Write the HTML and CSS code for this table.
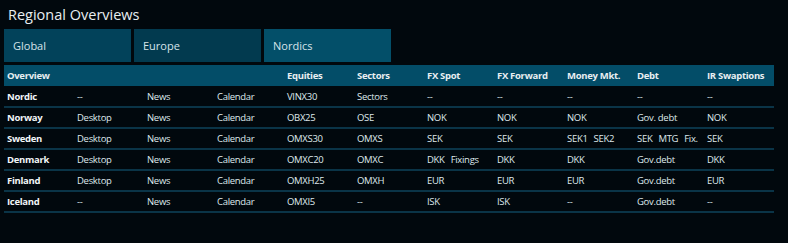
FILE: index.html
```html
<!DOCTYPE html>
<html>
<head>
<meta charset="utf-8">
<link rel="stylesheet" href="styles.css">
</head>
<body>
<div class="page">
  <h1 class="title">Regional Overviews</h1>
  <div class="tabs">
    <div class="tab tab-global">Global</div>
    <div class="tab tab-europe">Europe</div>
    <div class="tab tab-nordics">Nordics</div>
  </div>
  <table class="grid">
    <thead>
      <tr>
        <th>Overview</th><th></th><th></th><th></th>
        <th>Equities</th><th>Sectors</th><th>FX Spot</th><th>FX Forward</th>
        <th>Money Mkt.</th><th>Debt</th><th>IR Swaptions</th>
      </tr>
    </thead>
    <tbody>
      <tr><td class="name">Nordic</td><td>--</td><td>News</td><td>Calendar</td><td>VINX30</td><td>Sectors</td><td>--</td><td>--</td><td>--</td><td>--</td><td>--</td></tr>
      <tr><td class="name">Norway</td><td>Desktop</td><td>News</td><td>Calendar</td><td>OBX25</td><td>OSE</td><td>NOK</td><td>NOK</td><td>NOK</td><td>Gov. debt</td><td>NOK</td></tr>
      <tr><td class="name">Sweden</td><td>Desktop</td><td>News</td><td>Calendar</td><td>OMXS30</td><td>OMXS</td><td>SEK</td><td>SEK</td><td><span class="pair">SEK1</span>SEK2</td><td><span class="pair">SEK</span><span class="pair">MTG</span>Fix.</td><td>SEK</td></tr>
      <tr><td class="name">Denmark</td><td>Desktop</td><td>News</td><td>Calendar</td><td>OMXC20</td><td>OMXC</td><td><span class="pair">DKK</span>Fixings</td><td>DKK</td><td>DKK</td><td>Gov.debt</td><td>DKK</td></tr>
      <tr><td class="name">Finland</td><td>Desktop</td><td>News</td><td>Calendar</td><td>OMXH25</td><td>OMXH</td><td>EUR</td><td>EUR</td><td>EUR</td><td>Gov.debt</td><td>EUR</td></tr>
      <tr><td class="name">Iceland</td><td>--</td><td>News</td><td>Calendar</td><td>OMXI5</td><td>--</td><td>ISK</td><td>ISK</td><td>--</td><td>Gov.debt</td><td>--</td></tr>
    </tbody>
  </table>
</div>
</body>
</html>
```
FILE: styles.css
```css
html, body {
  margin: 0;
  padding: 0;
  background: #01080d;
  color: #e6eef2;
  font-family: "Open Sans", "DejaVu Sans", sans-serif;
}

.page {
  padding: 4px 14px 0 4px;
}

.title {
  margin: 0 0 3px 4px;
  font-size: 14.5px;
  font-weight: 400;
  line-height: 22px;
  color: #e8eef1;
}

.tabs {
  display: flex;
  gap: 3px;
  margin-bottom: 3px;
}

.tab {
  width: 127px;
  height: 33px;
  box-sizing: border-box;
  padding-left: 9px;
  display: flex;
  align-items: center;
  font-size: 11px;
  color: #d6e3ea;
}

.tab-global { background: #02425a; }
.tab-europe { background: #023a4f; }
.tab-nordics { background: #034f69; }

.grid {
  width: 770px;
  border-collapse: collapse;
  table-layout: fixed;
  font-size: 9.5px;
  letter-spacing: -0.3px;
}

.grid th, .grid td {
  width: 67px;
  padding: 0 0 0 3px;
  text-align: left;
  white-space: nowrap;
  overflow: hidden;
}

.grid thead tr {
  background: #034d68;
  height: 21px;
}

.grid th {
  font-weight: 700;
  color: #e8eef1;
}

.grid tbody tr {
  height: 21px;
  border-bottom: 2px solid #0a3447;
}

.grid td {
  color: #dfe8ec;
}

.grid td.name {
  font-weight: 700;
  color: #f2f6f8;
}

.pair {
  margin-right: 6px;
}
```
